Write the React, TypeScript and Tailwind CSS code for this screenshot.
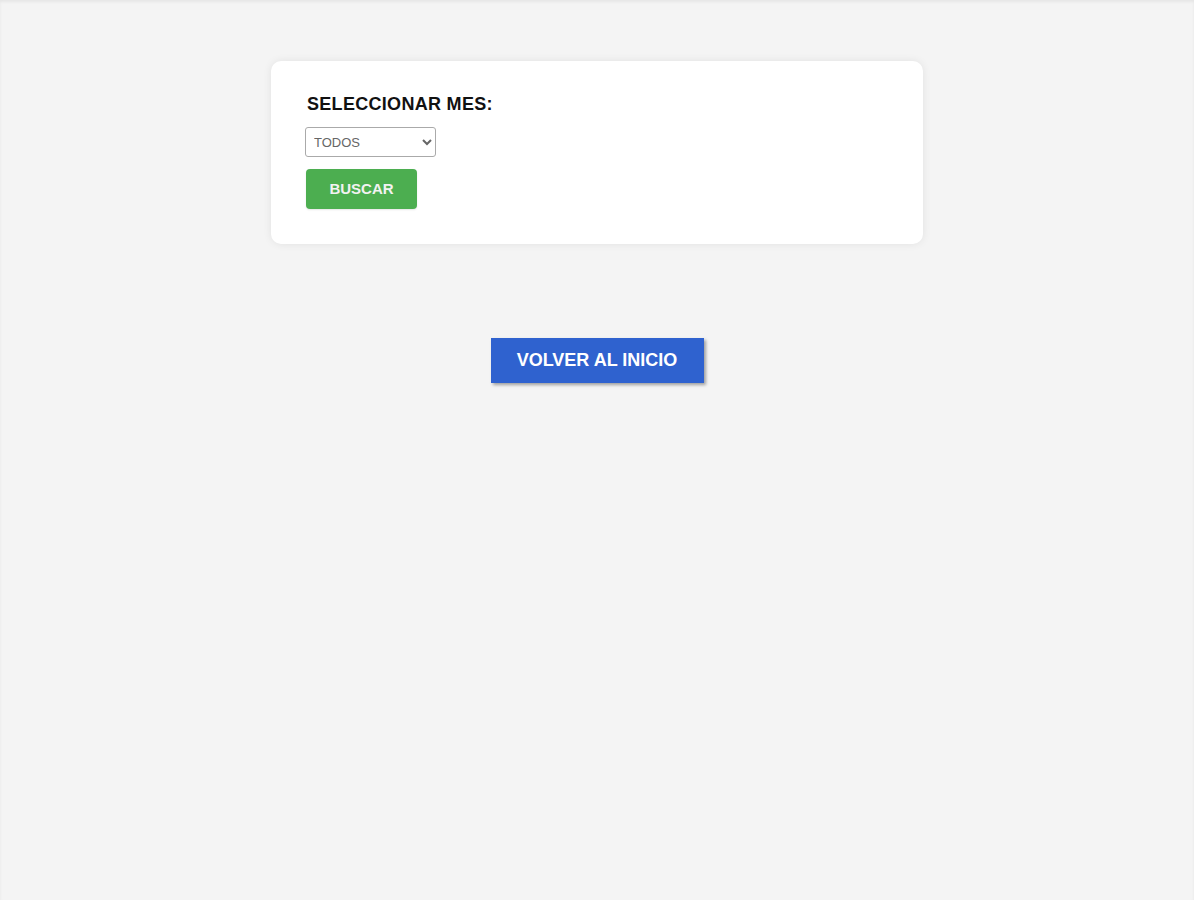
import React from 'react';

export default function App() {
    return (
        <div className="min-h-[900px] bg-[#f4f4f4] shadow-[inset_0_2px_3px_rgba(0,0,0,0.06)] font-['Liberation_Sans',Arial,sans-serif] flex flex-col items-center">
            {/* Filter card */}
            <div className="mt-[61px] w-[652px] bg-white rounded-[10px] shadow-[0_0_8px_rgba(0,0,0,0.08)] pt-[33px] pb-[35px] px-[36px] flex flex-col items-start">
                <label className="text-[18px] font-bold text-[#111] tracking-[0.3px] leading-[21px]">
                    SELECCIONAR MES:
                </label>
                <select
                    className="mt-[12px] -ml-[2px] w-[131px] h-[30px] border border-[#aaa] rounded-[3px] bg-white text-[13px] text-[#666] pl-[4px] font-['Liberation_Sans',Arial,sans-serif]"
                    defaultValue="TODOS"
                >
                    <option>TODOS</option>
                    <option>ENERO</option>
                    <option>FEBRERO</option>
                    <option>MARZO</option>
                </select>
                <button className="mt-[12px] -ml-[1px] w-[111px] h-[40px] bg-[#4cae50] rounded-[4px] text-[#f2f2f2] text-[15px] font-bold shadow-[0_1px_2px_rgba(0,0,0,0.1)]">
                    BUSCAR
                </button>
            </div>

            {/* Back button */}
            <button className="mt-[94px] w-[213px] h-[45px] bg-[#2f62cf] text-white text-[18px] font-bold shadow-[2px_2px_3px_rgba(0,0,0,0.35)]">
                VOLVER AL INICIO
            </button>
        </div>
    );
}
